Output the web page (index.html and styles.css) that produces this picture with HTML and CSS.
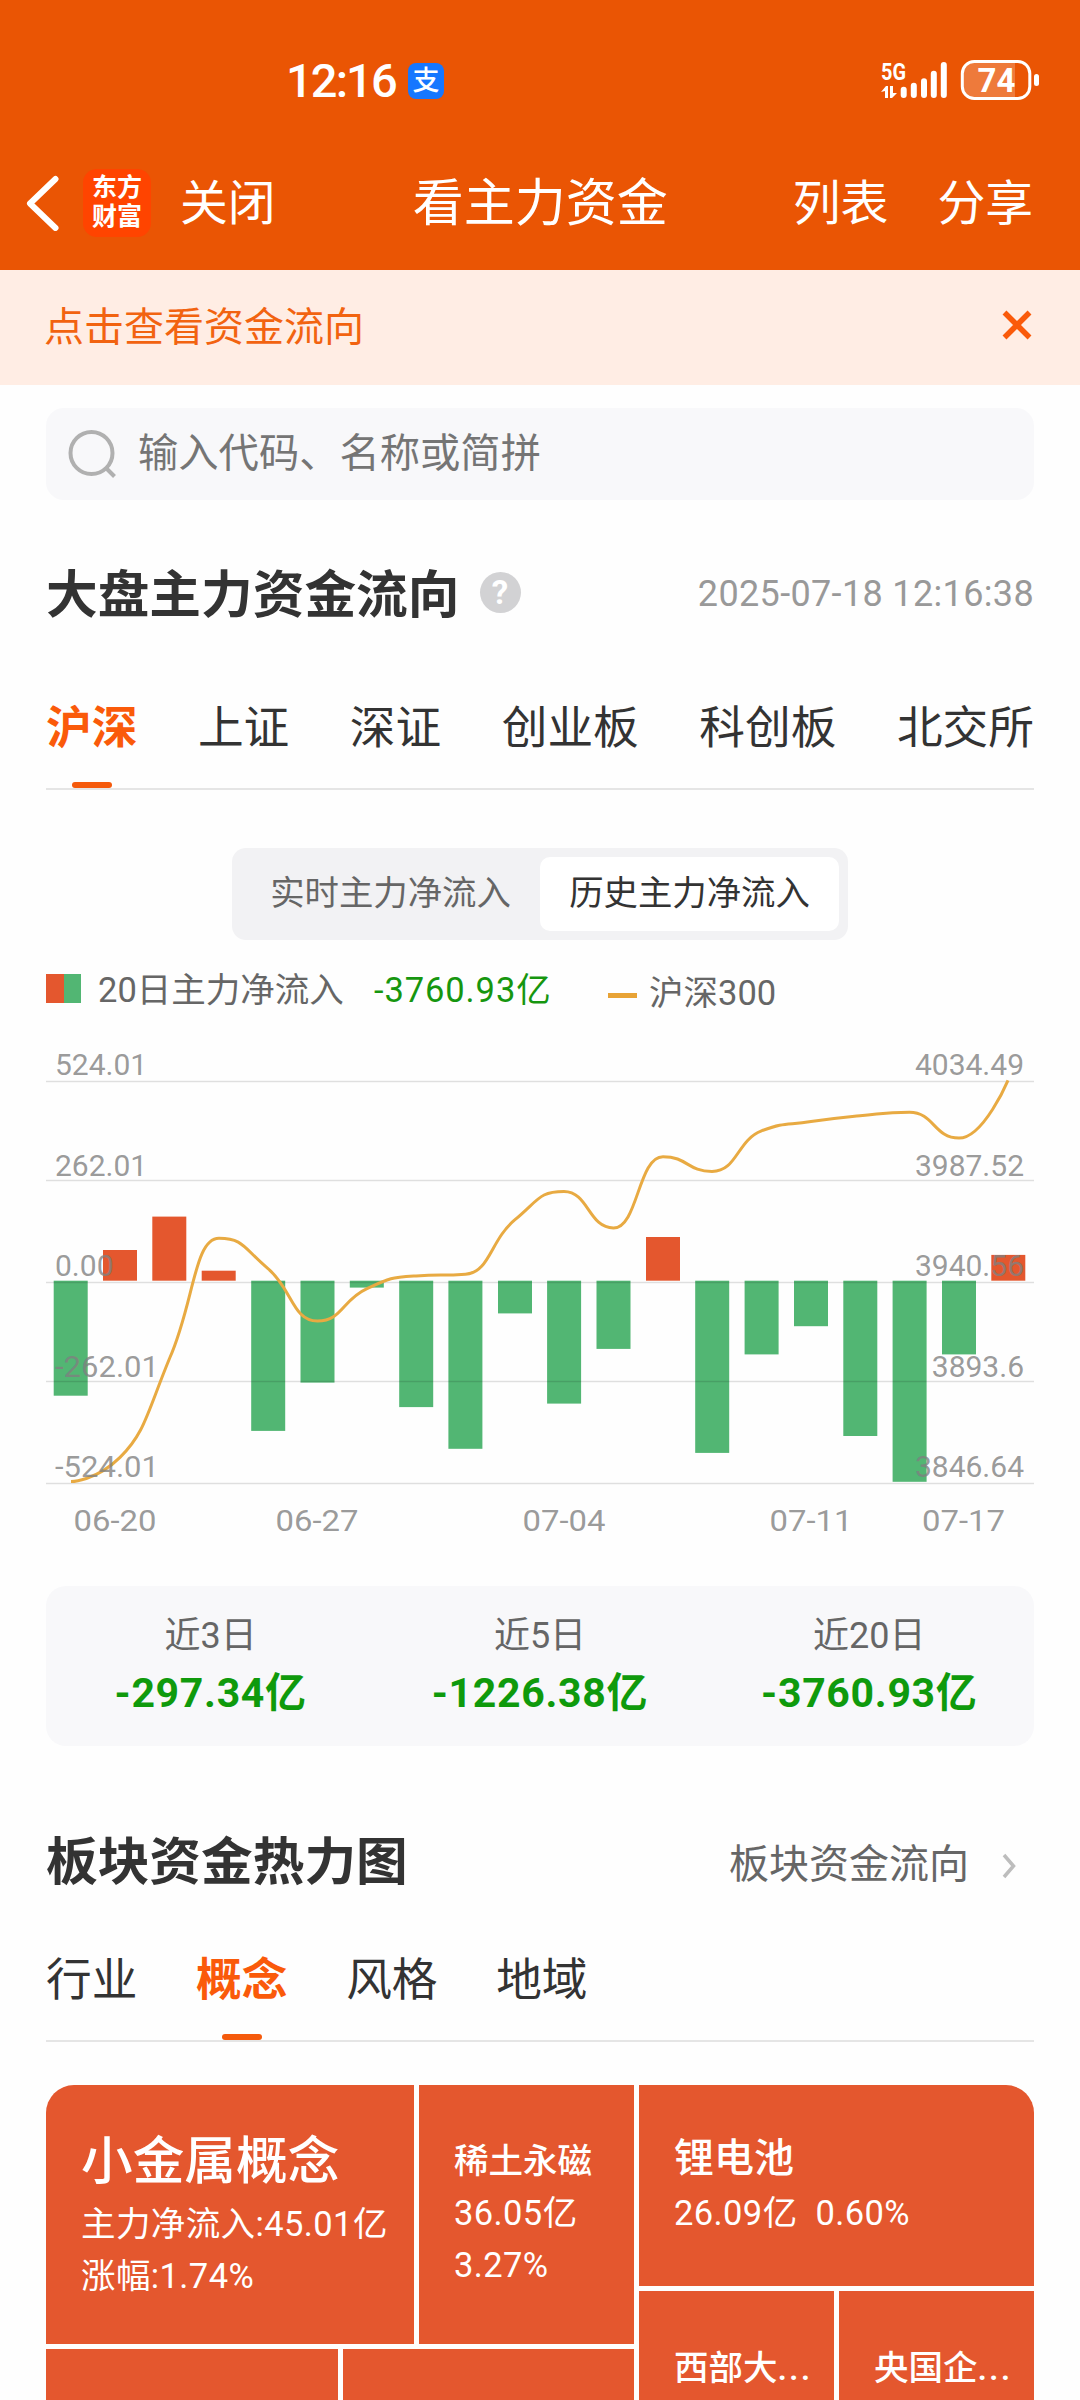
FILE: index.html
```html
<!DOCTYPE html>
<html lang="zh-CN">
<head>
<meta charset="utf-8">
<title>看主力资金</title>
<link rel="stylesheet" href="styles.css">
</head>
<body>
<div class="page">
  <header class="top">
    <div class="status">
      <div class="status-left">
        <span class="clock">12:16</span>
        <span class="pay">支</span>
      </div>
      <svg class="status-right" viewBox="880 56 164 48" width="164" height="48">
        <text x="881" y="79.5" class="net" textLength="25" lengthAdjust="spacingAndGlyphs">5G</text>
        <g fill="#fff">
          <path d="M881 92l5-6h2v12h-3v-7zM890 86h3v7h4l-5 5h-2z"/>
          <rect x="900.7" y="86.7" width="6" height="11.3" rx="3"/>
          <rect x="910.8" y="82.7" width="6" height="15.3" rx="3"/>
          <rect x="921" y="78.3" width="6" height="19.7" rx="3"/>
          <rect x="930.8" y="70.7" width="6" height="27.3" rx="3"/>
          <rect x="940.8" y="62" width="6" height="36" rx="3"/>
          <path d="M974 61h41v38h-41a12 12 0 0 1-12-12v-14a12 12 0 0 1 12-12z" opacity=".22"/>
          <rect x="1034" y="74" width="5" height="12" rx="2.5"/>
        </g>
        <rect x="962.3" y="61.5" width="67.5" height="37" rx="12" fill="none" stroke="#fff" stroke-width="3"/>
        <text x="996.5" y="92" class="batt">74</text>
      </svg>
    </div>
    <nav class="bar">
      <svg class="back" viewBox="0 0 34 56" width="34" height="56"><path d="M29.500 4L4 28.500l25.500 24.500" fill="none" stroke="#fff" stroke-width="6" stroke-linecap="round" stroke-linejoin="round"/></svg>
      <div class="logo"><span>东方</span><span>财富</span></div>
      <span class="close">关闭</span>
      <h1 class="bar-title">看主力资金</h1>
      <span class="act">列表</span>
      <span class="act">分享</span>
    </nav>
  </header>

  <div class="notice">
    <span>点击查看资金流向</span>
    <svg viewBox="0 0 30 30" width="30" height="30"><path d="M2.5 2.5l25 25M27.5 2.5l-25 25" stroke="#fa5a0a" stroke-width="5.500" fill="none"/></svg>
  </div>

  <main class="main">
    <div class="search">
      <svg viewBox="0 0 48 48" width="48" height="48" fill="none" stroke="#b0b0b0" stroke-width="4"><circle cx="23.5" cy="23" r="21"/><path d="M38 38l8.500 8.500"/></svg>
      <span>输入代码、名称或简拼</span>
    </div>

    <div class="head head-market">
      <h2>大盘主力资金流向</h2>
      <span class="help">?</span>
      <time>2025-07-18 12:16:38</time>
    </div>

    <div class="tabs tabs-market">
      <span class="tab on">沪深</span><span class="tab">上证</span><span class="tab">深证</span><span class="tab">创业板</span><span class="tab">科创板</span><span class="tab">北交所</span>
    </div>

    <div class="segment"><span>实时主力净流入</span><span class="on">历史主力净流入</span></div>

    <div class="legend">
      <i class="swatch"></i>
      <span class="lg-name">20日主力净流入</span>
      <span class="lg-val">-3760.93亿</span>
      <i class="dash"></i>
      <span class="lg-index">沪深300</span>
    </div>

    <svg class="chart" viewBox="46 1040 988 510" width="988" height="510">
      <g fill="#e4572e">
        <rect x="103" y="1250" width="34" height="30.700"/>
        <rect x="152.300" y="1216.600" width="34" height="64.100"/>
        <rect x="201.700" y="1270.700" width="34" height="10"/>
        <rect x="646" y="1237" width="34" height="43.700"/>
        <rect x="991.300" y="1254.900" width="34" height="25.800"/>
      </g>
      <g fill="#52b673">
        <rect x="53.700" y="1280.700" width="34" height="115"/>
        <rect x="251.200" y="1280.700" width="34" height="150.200"/>
        <rect x="300.500" y="1280.700" width="34" height="101.900"/>
        <rect x="349.800" y="1280.700" width="34" height="6.900"/>
        <rect x="399.200" y="1280.700" width="34" height="126.400"/>
        <rect x="448.400" y="1280.700" width="34" height="168.100"/>
        <rect x="498" y="1280.700" width="34" height="32.700"/>
        <rect x="547.100" y="1280.700" width="34" height="122.900"/>
        <rect x="596.500" y="1280.700" width="34" height="68.200"/>
        <rect x="695.200" y="1280.700" width="34" height="172.200"/>
        <rect x="744.600" y="1280.700" width="34" height="73.700"/>
        <rect x="794" y="1280.700" width="34" height="45.500"/>
        <rect x="843.300" y="1280.700" width="34" height="155.300"/>
        <rect x="892.600" y="1280.700" width="34" height="201.100"/>
        <rect x="942" y="1280.700" width="34" height="73.700"/>
      </g>
      <path d="M46 1081.500H1034M46 1180.500H1034M46 1282.500H1034M46 1381.500H1034M46 1483.500H1034" stroke="#000" stroke-opacity=".12" stroke-width="1.300"/>
      <path d="M71 1481.500C71 1481.500 95.500 1481.500 120 1457.400C144.700 1433.300 147 1413.300 169.500 1358.500C194 1303.700 194 1238.300 219 1238.300C243.500 1238.300 243.500 1247.900 268 1268.600C292.500 1289.300 292.500 1321 317.500 1321C342 1321 342 1299.900 367 1288.600C391.500 1277.300 391.500 1277.600 416 1275.900C441 1274.200 441 1275.900 465.500 1274.200C490 1272.500 490 1240.400 515 1219.700C539.500 1199 539.500 1191.500 564 1191.500C588.500 1191.500 588.500 1228 613.500 1228C638 1228 638 1156.700 663 1156.700C687.500 1156.700 687.500 1171.500 712 1171.500C737 1171.500 737 1140.200 761.500 1130.900C786 1121.600 786 1125.400 811 1121.600C835.500 1117.800 835.500 1118 860 1115.700C885 1113.400 885 1112.300 909.500 1112.300C934 1112.300 934 1138.100 959 1138.100C983.500 1138.100 1008 1080.300 1008 1080.300" fill="none" stroke="#e8aa42" stroke-width="3"/>
      <g class="axis">
        <text x="55" y="1075">524.01</text>
        <text x="55" y="1176">262.01</text>
        <text x="55" y="1275.500">0.00</text>
        <text x="55" y="1377" textLength="104" lengthAdjust="spacingAndGlyphs">-262.01</text>
        <text x="55" y="1477" textLength="104" lengthAdjust="spacingAndGlyphs">-524.01</text>
      </g>
      <g class="axis end">
        <text x="1024" y="1075">4034.49</text>
        <text x="1024" y="1176">3987.52</text>
        <text x="1024" y="1275.500">3940.56</text>
        <text x="1024" y="1377">3893.6</text>
        <text x="1024" y="1477">3846.64</text>
      </g>
      <g class="axis">
        <text x="73.500" y="1530.500" textLength="83" lengthAdjust="spacingAndGlyphs">06-20</text>
        <text x="275.500" y="1530.500" textLength="83" lengthAdjust="spacingAndGlyphs">06-27</text>
        <text x="522.500" y="1530.500" textLength="83" lengthAdjust="spacingAndGlyphs">07-04</text>
        <text x="769.500" y="1530.500" textLength="83" lengthAdjust="spacingAndGlyphs">07-11</text>
        <text x="922" y="1530.500" textLength="83" lengthAdjust="spacingAndGlyphs">07-17</text>
      </g>
    </svg>

    <div class="stats">
      <div><span>近3日</span><b>-297.34亿</b></div>
      <div><span>近5日</span><b>-1226.38亿</b></div>
      <div><span>近20日</span><b>-3760.93亿</b></div>
    </div>

    <div class="head head-heat">
      <h2>板块资金热力图</h2>
      <span class="more">板块资金流向</span>
      <svg viewBox="0 0 14 26" width="14" height="26"><path d="M2 2l9.500 11L2 24" fill="none" stroke="#bdbdbd" stroke-width="3.500"/></svg>
    </div>

    <div class="tabs tabs-heat">
      <span class="tab">行业</span><span class="tab on">概念</span><span class="tab">风格</span><span class="tab">地域</span>
    </div>

    <div class="heat">
      <div class="col col-left">
        <div class="row row-main">
          <div class="cell cell-a"><strong>小金属概念</strong><span>主力净流入:45.01亿</span><span>涨幅:1.74%</span></div>
          <div class="cell cell-b"><strong>稀土永磁</strong><span>36.05亿</span><span>3.27%</span></div>
        </div>
        <div class="row row-rest"><div class="cell"></div><div class="cell"></div></div>
      </div>
      <div class="col col-right">
        <div class="cell cell-c"><strong>锂电池</strong><span>26.09亿&nbsp; 0.60%</span></div>
        <div class="row row-rest">
          <div class="cell cell-d"><strong>西部大<em>...</em></strong></div>
          <div class="cell cell-d"><strong>央国企<em>...</em></strong></div>
        </div>
      </div>
    </div>
  </main>
</div>
</body>
</html>
```
FILE: styles.css
```css
* { box-sizing: border-box; margin: 0; padding: 0; }
html, body { width: 1080px; height: 2400px; overflow: hidden; }
body { background: #fefefe; font-family: Roboto, "Noto Sans CJK SC", sans-serif; color: #333; }
svg { display: block; flex: none; }
span, time, h1, h2 { white-space: nowrap; }
.page { width: 1080px; height: 2400px; overflow: hidden; display: flex; flex-direction: column; }

.top { height: 270px; background: #ea5504; color: #fff; flex: none; }
.status { height: 136px; padding: 24px 36px 0 286px; display: flex; align-items: center; justify-content: space-between; }
.status-left { display: flex; align-items: center; gap: 12px; }
.clock { font-size: 47px; font-weight: 500; line-height: 48px; width: 110px; letter-spacing: -1.9px; padding-top: 2px; }
.pay { width: 36px; height: 36px; border-radius: 8px; background: #1677ff; font-size: 27px; line-height: 36px; font-weight: 500; text-align: center; margin-top: 2px; }
.net { font-size: 24px; font-weight: 700; fill: #fff; }
.batt { font-size: 33px; font-weight: 700; fill: #fff; text-anchor: middle; }
.bar { height: 134px; display: flex; align-items: center; padding: 0 47px 0 26px; font-size: 47.800px; line-height: 68px; }
.bar .close, .bar h1, .bar .act { padding-top: 2px; }
.logo { width: 68px; height: 68px; border-radius: 14px; background: #ff4400; margin-left: 23px; padding: 4px 0; display: flex; flex-direction: column; align-items: center; font-size: 25px; line-height: 29px; font-weight: 700; }
.close { margin-left: 29px; }
.bar-title { font-size: 51px; font-weight: 400; margin-left: auto; margin-right: 78px; width: 302px; }
.act + .act { margin-left: 49px; }

.notice { height: 115px; flex: none; background: #ffede4; color: #f26310; padding: 0 48px 5px 44px; display: flex; align-items: center; justify-content: space-between; font-size: 40px; }
.notice span { padding-bottom: 2px; }

.main { padding: 23px 46px 0; display: flex; flex-direction: column; }
.search { height: 92px; border-radius: 18px; background: #f8f8fa; display: flex; align-items: center; gap: 22px; padding-left: 22px; color: #757575; font-size: 40.300px; line-height: 56px; }
.search span { padding-bottom: 1px; }
.head { display: flex; align-items: center; }
.head h2 { font-size: 51.700px; line-height: 70px; font-weight: 700; padding-top: 4px; }
.head-market { height: 70px; margin-top: 59px; }
.help { width: 41px; height: 41px; border-radius: 50%; background: #d2d2d4; color: #fff; font-size: 33px; line-height: 42px; font-weight: 700; text-align: center; margin: -3px 0 0 20px; }
.head time { margin-left: auto; font-size: 36px; color: #999; letter-spacing: .35px; }

.tabs { display: flex; border-bottom: 2px solid #e5e5e5; font-size: 45.700px; line-height: 62px; }
.tab { position: relative; }
.tab.on { color: #fa5a0a; font-weight: 700; }
.tab.on::after { content: ""; position: absolute; left: 50%; bottom: 0; width: 40px; height: 6px; margin-left: -20px; border-radius: 3px; background: #f55a0c; }
.tabs-market { justify-content: space-between; height: 92px; margin-top: 69px; }
.tabs .tab { height: 90px; }

.segment { align-self: center; width: 616px; height: 92px; margin-top: 58px; border-radius: 14px; background: #f2f2f4; padding: 9px; display: flex; font-size: 34.400px; line-height: 72px; color: #666; }
.segment span { flex: 1; text-align: center; }
.segment .on { background: #fff; border-radius: 10px; color: #333; }

.legend { height: 60px; margin-top: 20px; display: flex; align-items: center; font-size: 34.500px; line-height: 60px; color: #666; }
.swatch { width: 35px; height: 29px; background: linear-gradient(90deg, #e4572e 50%, #52b673 50%); margin: -3px 17px 0 0; }
.lg-name { width: 276px; }
.lg-val { width: 234px; color: #16960f; letter-spacing: .9px; }
.dash { width: 29px; height: 5px; background: #e8a336; margin: 11px 12px 0 0; }
.lg-index { padding-top: 6px; }

.chart { margin-top: 20px; }
.axis { font-size: 30px; fill: #808080; fill-opacity: .8; }
.end { text-anchor: end; }

.stats { height: 160px; margin-top: 36px; border-radius: 20px; background: #f8f8fa; display: flex; padding-top: 21px; }
.stats div { flex: 1; display: flex; flex-direction: column; align-items: center; }
.stats span { font-size: 36px; line-height: 58px; color: #666; }
.stats b { font-size: 41px; line-height: 56px; color: #0f9a0c; letter-spacing: .7px; }

.head-heat { height: 70px; margin-top: 80px; }
.more { margin-left: auto; font-size: 40px; color: #666; margin-right: 33px; }
.head-heat svg { margin: 10px 18px 0 0; }
.tabs-heat { height: 92px; margin-top: 54px; gap: 58.700px; }

.heat { height: 400px; margin-top: 43px; display: flex; gap: 5px; border-radius: 28px 28px 0 0; overflow: hidden; color: #fff; flex: none; }
.col { display: flex; flex-direction: column; gap: 5px; }
.col-left { width: 588px; }
.col-right { width: 395px; }
.row { display: flex; gap: 5px; }
.row-main { height: 259px; }
.row-rest { flex: 1; }
.row-rest .cell { flex: 1; }
.cell { background: #e4572e; display: flex; flex-direction: column; padding-left: 35px; font-size: 34.500px; line-height: 52px; }
.cell span { letter-spacing: .4px; }
.cell strong { font-weight: 500; }
.cell-a { width: 368px; padding-top: 41px; }
.cell-a strong { font-size: 51.700px; line-height: 72px; }
.cell-b { flex: 1; padding-top: 50px; }
.cell-c { height: 201px; padding-top: 46px; }
.cell-c strong { font-size: 40px; line-height: 56px; }
.cell-d { padding-top: 51px; }
.cell-d em { font-style: normal; letter-spacing: 2px; }
```
